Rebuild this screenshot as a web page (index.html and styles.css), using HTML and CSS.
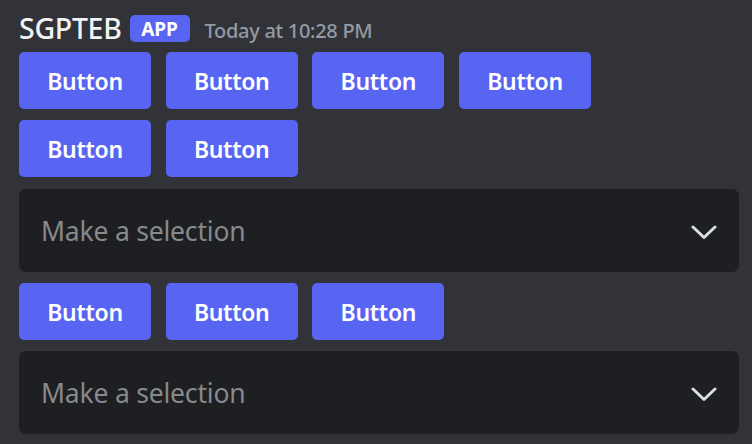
FILE: index.html
```html
<!DOCTYPE html>
<html>
<head>
<meta charset="utf-8">
<link rel="stylesheet" href="styles.css">
</head>
<body>
<div class="msg">
  <div class="header">
    <span class="username">SGPTEB</span>
    <span class="badge">APP</span>
    <span class="timestamp">Today at 10:28 PM</span>
  </div>
  <div class="components">
    <div class="row">
      <button class="btn">Button</button>
      <button class="btn">Button</button>
      <button class="btn">Button</button>
      <button class="btn">Button</button>
    </div>
    <div class="row">
      <button class="btn">Button</button>
      <button class="btn">Button</button>
    </div>
    <div class="select first">
      <span class="placeholder">Make a selection</span>
      <svg class="chevron" width="26" height="15" viewBox="0 0 26 15"><path d="M2 2 L13 12.5 L24 2" fill="none" stroke="#dbdee1" stroke-width="3" stroke-linecap="round" stroke-linejoin="round"/></svg>
    </div>
    <div class="row">
      <button class="btn">Button</button>
      <button class="btn">Button</button>
      <button class="btn">Button</button>
    </div>
    <div class="select">
      <span class="placeholder">Make a selection</span>
      <svg class="chevron" width="26" height="15" viewBox="0 0 26 15"><path d="M2 2 L13 12.5 L24 2" fill="none" stroke="#dbdee1" stroke-width="3" stroke-linecap="round" stroke-linejoin="round"/></svg>
    </div>
  </div>
</div>
</body>
</html>
```
FILE: styles.css
```css
html, body {
  margin: 0;
  padding: 0;
  background: #313338;
  height: 100%;
  overflow: hidden;
}
body {
  font-family: "Noto Sans", "Open Sans", sans-serif;
}
.msg {
  padding: 15px 13px 0 19px;
}
.header {
  display: flex;
  align-items: center;
  height: 27px;
}
.username {
  color: #f2f3f5;
  font-size: 28.5px;
  font-weight: 500;
  line-height: 27px;
  letter-spacing: -0.3px;
}
.badge {
  margin-left: 8px;
  height: 27px;
  width: 60px;
  box-sizing: border-box;
  background: #5865f2;
  color: #ffffff;
  border-radius: 5px;
  font-size: 19px;
  font-weight: 700;
  display: flex;
  align-items: center;
  justify-content: center;
}
.timestamp {
  margin-left: 15px;
  margin-top: 4px;
  color: #949ba4;
  font-size: 20px;
  font-weight: 500;
  letter-spacing: -0.3px;
}
.components {
  margin-top: 10px;
  display: flex;
  flex-direction: column;
  gap: 11px;
}
.row {
  display: flex;
  gap: 14.7px;
}
.btn {
  width: 132px;
  height: 57px;
  border: none;
  border-radius: 5px;
  background: #5865f2;
  color: #ffffff;
  font-family: "Noto Sans", "Open Sans", sans-serif;
  font-size: 23px;
  font-weight: 600;
  padding: 0;
  letter-spacing: -0.3px;
}
.select {
  height: 83px;
  border-radius: 7px;
  background: #1e1f22;
  display: flex;
  align-items: center;
  justify-content: space-between;
  padding: 0 22px 0 22px;
}
.select.first {
  margin-top: 1px;
}
.placeholder {
  color: #87898c;
  font-size: 26.5px;
  font-weight: 400;
  letter-spacing: -0.2px;
}
.chevron {
  display: block;
  margin-top: 4px;
}
```
